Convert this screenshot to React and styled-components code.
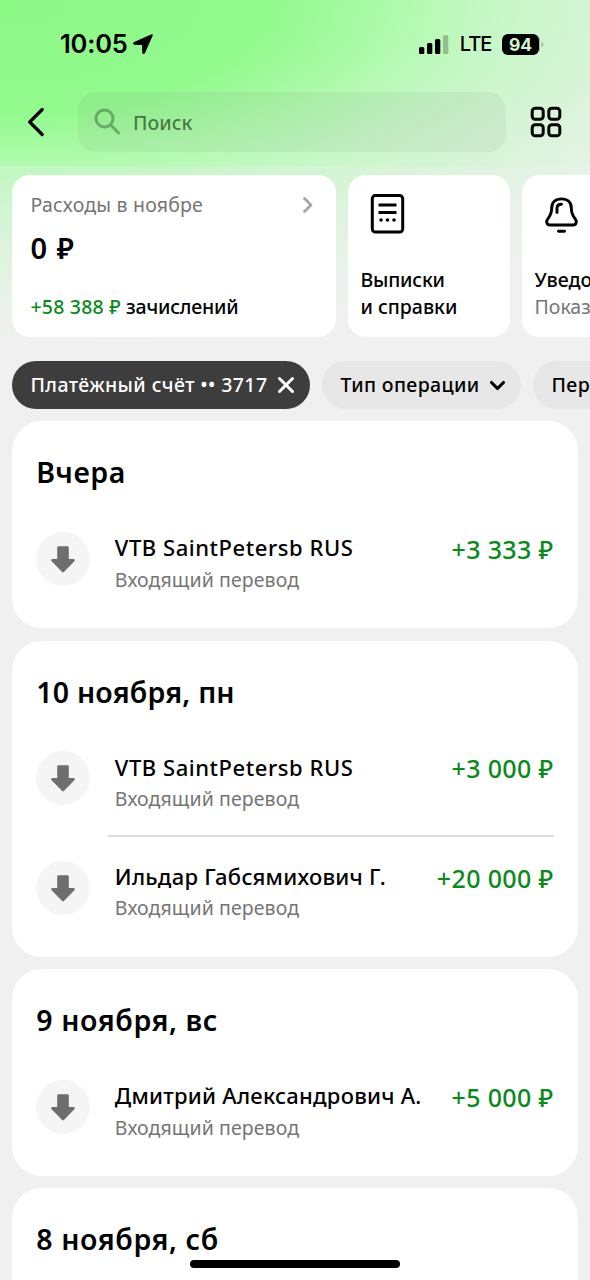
import React from 'react';
import styled, { createGlobalStyle } from 'styled-components';

const Global = createGlobalStyle`
  *, *::before, *::after { box-sizing: border-box; }
  body { margin: 0; background: #f0f0f0; font-family: "Noto Sans", "Open Sans", sans-serif; color: #000; }
`;

const Label = styled.span`
  display: block;
  white-space: nowrap;
  font-size: ${(p) => p.$size}px;
  line-height: ${(p) => p.$line || 26}px;
  font-weight: ${(p) => p.$weight || 400};
  letter-spacing: ${(p) => p.$track || 0}px;
  color: ${(p) => p.$color || '#000'};
`;

const Screen = styled.main`
  position: relative;
  width: 590px;
  height: 1280px;
  overflow: hidden;
  display: flex;
  flex-direction: column;
  background:
    linear-gradient(rgba(240, 240, 240, 0.22), rgba(240, 240, 240, 0.22)) 0 166px / 100% 200px no-repeat,
    radial-gradient(ellipse 840px 345px at 0 0,
      rgb(140, 248, 134) 0%, rgb(147, 250, 142) 33%, rgb(178, 250, 176) 48.5%,
      rgb(200, 247, 200) 60%, rgb(217, 244, 217) 74%, rgb(232, 242, 234) 88%, #f0f0f0 100%);
`;

const StatusBar = styled.div`
  flex: none;
  height: 92px;
  padding: 0 46px 4px 60px;
  display: flex;
  align-items: center;
  justify-content: space-between;
`;

const Group = styled.div`
  display: flex;
  align-items: center;
  gap: ${(p) => p.$gap}px;
`;

const Clock = styled(Label)`
  font-family: Inter, sans-serif;
`;

const Battery = styled.div`
  width: 37px;
  height: 21px;
  border-radius: 6px;
  background: #000;
  color: #d3f4d3;
  font: 700 17.5px/21px Inter, sans-serif;
  text-align: center;
`;

const NavBar = styled.header`
  flex: none;
  height: 74px;
  padding: 0 27px 14px 26px;
  display: flex;
  align-items: center;
`;

const SearchField = styled.div`
  width: 428px;
  height: 60px;
  margin: 0 24px 0 32px;
  padding: 0 16px;
  display: flex;
  align-items: center;
  gap: 12px;
  border-radius: 18px;
  background: rgba(120, 120, 120, 0.09);
`;

const Placeholder = styled(Label)`
  padding-top: 2px;
`;

const CardStrip = styled.section`
  display: flex;
  flex: none;
  gap: 12px;
  padding: 9px 0 0 12px;
`;

const Card = styled.div`
  flex: none;
  width: ${(p) => p.$width}px;
  height: 162px;
  padding: ${(p) => p.$pad};
  border-radius: 18px;
  background: #fff;
  display: flex;
  flex-direction: column;
`;

const CardHead = styled.div`
  display: flex;
  align-items: center;
  justify-content: space-between;
`;

const CardFoot = styled.div`
  margin-top: auto;
  display: flex;
  flex-direction: ${(p) => (p.$stack ? 'column' : 'row')};
`;

const ChipStrip = styled.nav`
  display: flex;
  flex: none;
  gap: 12px;
  padding: 24px 0 12.3px 12px;
`;

const Chip = styled.div`
  flex: none;
  width: ${(p) => p.$width}px;
  height: 48px;
  padding: 0 15px 0 18.5px;
  border-radius: 24px;
  display: flex;
  align-items: center;
  justify-content: space-between;
  background: ${(p) => (p.$active ? '#3d3d3d' : '#e7e7e7')};
`;

const DayList = styled.div`
  display: flex;
  flex-direction: column;
  gap: 12.6px;
  padding: 0 12.5px 0 12.3px;
`;

const Day = styled.section`
  flex: none;
  padding: 31px 24px 42px;
  border-radius: 30px;
  background: #fff;
`;

const DayTitle = styled.h2`
  margin: 0;
  font-size: 28.5px;
  line-height: 40px;
  font-weight: 600;
  letter-spacing: ${(p) => p.$track}px;
  white-space: nowrap;
`;

const Operations = styled.div`
  padding-top: 39.7px;
`;

const Operation = styled.article`
  display: flex;
  height: 54px;
`;

const Divider = styled.hr`
  height: 1.5px;
  border: 0;
  margin: 30px 0 23.8px 71.5px;
  background: #dcdcdc;
`;

const Avatar = styled.div`
  width: 54px;
  height: 54px;
  margin-right: 24.5px;
  border-radius: 50%;
  background: #f5f5f5;
  display: flex;
  align-items: center;
  justify-content: center;
`;

const Details = styled.div`
  flex: 1;
  margin-top: 2.4px;
  display: flex;
  flex-direction: column;
  gap: 6.4px;
`;

const HomeIndicator = styled.div`
  position: absolute;
  left: 190px;
  bottom: 12px;
  width: 210px;
  height: 8px;
  border-radius: 4px;
  background: #000;
`;

const stroke = { fill: 'none', stroke: 'currentColor', strokeLinecap: 'round', strokeLinejoin: 'round' };

const LocationIcon = () => (
  <svg width="20" height="20" viewBox="0 0 20 20">
    <path d="M18.6.3 1.1 8.1C-.5 8.9-.2 10.6 1.5 10.7L8.6 11c.3 0 .4.1.4.4l.3 7c.1 1.8 2 2 2.7.5L19.7 1.5C20.1.6 19.5-.1 18.6.3Z" />
  </svg>
);

const SignalIcon = () => (
  <svg width="30" height="19" viewBox="0 0 30 19">
    <rect x="0" y="12" width="5.3" height="7" rx="1.5" />
    <rect x="8" y="8" width="5.3" height="11" rx="1.5" />
    <rect x="16" y="4" width="5.3" height="15" rx="1.5" />
    <rect x="24" y="0" width="5.3" height="19" rx="1.5" opacity="0.23" />
  </svg>
);

const BatteryTip = () => (
  <svg width="5" height="21" viewBox="0 0 5 21">
    <path d="M0 2.5c.8 1 1 2 1 3.5v9c0 1.5-.2 2.5-1 3.5ZM2.5 7.7c2.7 1.3 2.7 4.3 0 5.6Z" opacity="0.23" />
  </svg>
);

const BackIcon = () => (
  <svg width="20" height="30" viewBox="0 0 20 30" {...stroke} strokeWidth="3.2">
    <path d="M16.2 2.5 3.7 15l12.5 12.5" />
  </svg>
);

const SearchIcon = () => (
  <svg width="27" height="28" viewBox="0 0 27 28" {...stroke} strokeWidth="3" color="rgba(40, 85, 40, 0.44)">
    <path d="M19 10.5a8.500 8.500 0 1 0-17 0 8.500 8.500 0 0 0 17 0ZM16.800 17 24.500 25" />
  </svg>
);

const GridIcon = () => (
  <svg width="32" height="32" viewBox="0 0 32 32" {...stroke} strokeWidth="3">
    <rect x="2.2" y="2.2" width="11" height="11" rx="3" />
    <rect x="18.8" y="2.2" width="11" height="11" rx="3" />
    <rect x="2.2" y="18.8" width="11" height="11" rx="3" />
    <rect x="18.8" y="18.8" width="11" height="11" rx="3" />
  </svg>
);

const ChevronRight = () => (
  <svg width="12" height="18" viewBox="0 0 12 18" {...stroke} strokeWidth="2.8" color="#a6a6a6">
    <path d="m2.5 2.5 6.500 6.500-6.500 6.500" />
  </svg>
);

const ReceiptIcon = () => (
  <svg width="52" height="42" viewBox="0 0 52 42">
    <rect x="11.3" y="2.6" width="30.4" height="36.4" rx="3" {...stroke} strokeWidth="3" />
    <path d="M17.500 12h18M17.500 19.500h18" fill="none" stroke="currentColor" strokeWidth="3" />
    <circle cx="20" cy="27" r="1.8" />
    <circle cx="26.5" cy="27" r="1.8" />
    <circle cx="33" cy="27" r="1.8" />
  </svg>
);

const BellIcon = () => (
  <svg width="52" height="42" viewBox="0 0 52 42" {...stroke} strokeWidth="2.9">
    <path d="M26.500 5.9c-6 0-9.800 3.500-9.800 9 0 5.500-1.200 7.600-3.900 10.900-2 2.500-1.100 6.200 2 6.200h23.400c3.100 0 4-3.700 2-6.200-2.700-3.300-3.900-5.400-3.900-10.900 0-5.500-3.800-9-9.800-9Z" />
    <path d="M22 19.500v-4.300c0-2.500 1.500-4 4.500-4" />
    <path d="M23.500 38.200h6" />
  </svg>
);

const CloseIcon = () => (
  <svg width="18" height="18" viewBox="0 0 18 18" {...stroke} strokeWidth="3" color="#fff">
    <path d="m2.5 2.5 13 13M15.5 2.5l-13 13" />
  </svg>
);

const ChevronDown = () => (
  <svg width="17" height="12" viewBox="0 0 17 12" {...stroke} strokeWidth="3.1">
    <path d="m2.500 3.500 6 6 6-6" />
  </svg>
);

const IncomingIcon = () => (
  <svg width="26" height="28" viewBox="0 0 26 28" fill="#6e6e6e">
    <path d="M8.7 1.200h8.600c1 0 1.500.5 1.500 1.500v11.400h4.700c1.400 0 1.800 1.300.9 2.200L13.900 27.100c-.6.6-1.200.6-1.800 0L1.600 16.300c-.9-.9-.5-2.200.9-2.200h4.700V2.700c0-1 .5-1.500 1.500-1.500Z" />
  </svg>
);

const GREEN = '#0b8a1c';
const GRAY = '#757575';

const days = [
  { title: 'Вчера', track: 0.6, items: [{ name: 'VTB SaintPetersb RUS', track: 0.55, sum: '+3 333 ₽' }] },
  {
    title: '10 ноября, пн',
    track: 0.2,
    items: [
      { name: 'VTB SaintPetersb RUS', track: 0.55, sum: '+3 000 ₽' },
      { name: 'Ильдар Габсямихович Г.', track: 0.25, sum: '+20 000 ₽' },
    ],
  },
  { title: '9 ноября, вс', track: 0.6, items: [{ name: 'Дмитрий Александрович А.', track: 0.25, sum: '+5 000 ₽' }] },
  { title: '8 ноября, сб', track: 0.6, items: [] },
];

export default function App() {
  return (
    <Screen>
      <Global />
      <StatusBar>
        <Group $gap={5}>
          <Clock $size={25.5} $weight={600} $track={-0.2}>10:05</Clock>
          <LocationIcon />
        </Group>
        <Group $gap={10.5}>
          <SignalIcon />
          <Clock $size={20} $weight={450} $track={-0.9}>LTE</Clock>
          <Group $gap={0}>
            <Battery>94</Battery>
            <BatteryTip />
          </Group>
        </Group>
      </StatusBar>
      <NavBar>
        <BackIcon />
        <SearchField>
          <SearchIcon />
          <Placeholder $size={19.5} $weight={500} $color="rgba(0, 35, 0, 0.58)">Поиск</Placeholder>
        </SearchField>
        <GridIcon />
      </NavBar>
      <CardStrip>
        <Card $width={324} $pad="16.5px 22px 17px 18.5px">
          <CardHead>
            <Label $size={19.5} $track={0.2} $color={GRAY}>Расходы в ноябре</Label>
            <ChevronRight />
          </CardHead>
          <Label $size={29} $weight={600} $track={1} $line={60}>0 ₽</Label>
          <CardFoot>
            <Label $size={19.5} $weight={500} $track={0.2} $color={GREEN}>+58 388 ₽&nbsp;</Label>
            <Label $size={19.5} $weight={500} $track={-0.2}>зачислений</Label>
          </CardFoot>
        </Card>
        <Card $width={162} $pad="18px 12.5px 17px">
          <ReceiptIcon />
          <CardFoot $stack>
            <Label $size={19.5} $weight={500} $track={-0.2} $line={27}>Выписки</Label>
            <Label $size={19.5} $weight={500} $line={27}>и справки</Label>
          </CardFoot>
        </Card>
        <Card $width={162} $pad="18px 12.5px 17px">
          <BellIcon />
          <CardFoot $stack>
            <Label $size={19.5} $weight={500} $line={27}>Уведомления</Label>
            <Label $size={19.5} $line={27} $color={GRAY}>Показать</Label>
          </CardFoot>
        </Card>
      </CardStrip>
      <ChipStrip>
        <Chip $width={298} $active>
          <Label $size={19.5} $weight={500} $track={0.4} $color="#fff">Платёжный счёт •• 3717</Label>
          <CloseIcon />
        </Chip>
        <Chip $width={199}>
          <Label $size={19.5} $weight={500} $track={0.35}>Тип операции</Label>
          <ChevronDown />
        </Chip>
        <Chip $width={140}>
          <Label $size={19.5} $weight={500} $track={0.4}>Период</Label>
        </Chip>
      </ChipStrip>
      <DayList>
        {days.map((day) => (
          <Day key={day.title}>
            <DayTitle $track={day.track}>{day.title}</DayTitle>
            <Operations>
              {day.items.map((op, i) => (
                <React.Fragment key={op.name}>
                  {i > 0 && <Divider />}
                  <Operation>
                    <Avatar><IncomingIcon /></Avatar>
                    <Details>
                      <Label $size={22} $weight={500} $track={op.track}>{op.name}</Label>
                      <Label $size={19.5} $track={0.1} $color={GRAY}>Входящий перевод</Label>
                    </Details>
                    <Label $size={25} $weight={500} $track={0.35} $line={34} $color={GREEN}>{op.sum}</Label>
                  </Operation>
                </React.Fragment>
              ))}
            </Operations>
          </Day>
        ))}
      </DayList>
      <HomeIndicator />
    </Screen>
  );
}
